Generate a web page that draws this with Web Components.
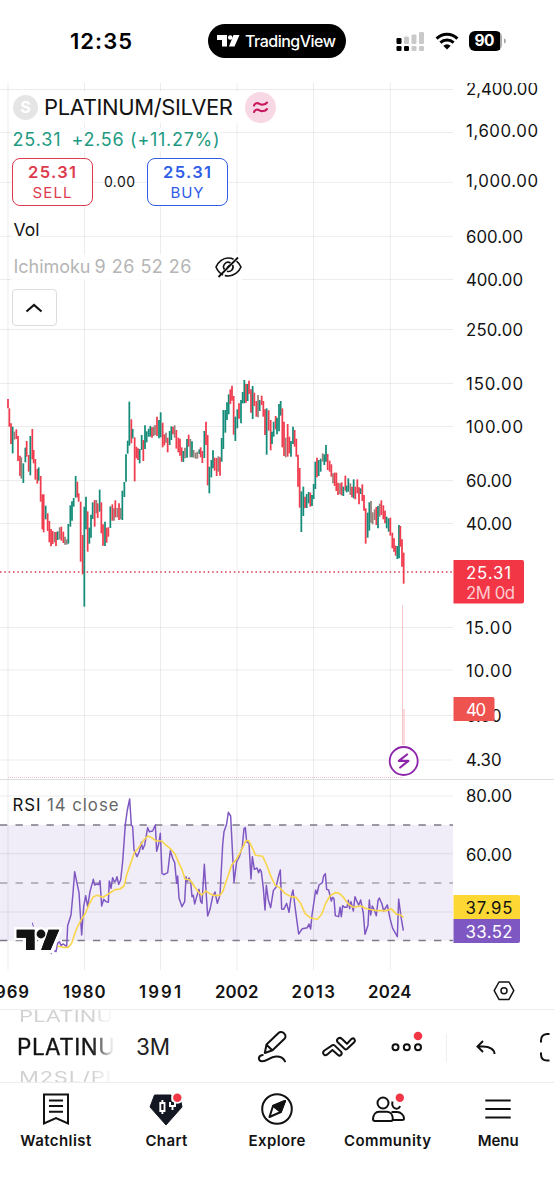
<!DOCTYPE html>
<html lang="en">
<head>
<meta charset="utf-8">
<title>Platinum/Silver chart</title>
<style>
html,body{margin:0;background:#fff}
body{width:554px;height:1200px;overflow:hidden;font-family:Inter,"Liberation Sans",sans-serif;color:#131313}
</style>
</head>
<body>
<trading-app></trading-app>
<script>
const define = (name, html, setup) => customElements.define(name, class extends HTMLElement {
  connectedCallback() {
    if (this.shadowRoot) return;
    const root = this.attachShadow({ mode: 'open' });
    const t = document.createElement('template');
    t.innerHTML = typeof html === 'function' ? html(this) : html;
    root.append(t.content.cloneNode(true));
    if (setup) setup(this, root);
  }
});

define('fit-text', `<style>:host{display:inline-block;white-space:nowrap;line-height:1}</style><span><slot></slot></span>`, (el, root) => {
  const target = +el.getAttribute('width');
  const span = root.querySelector('span');
  const natural = span.getBoundingClientRect().width;
  const n = el.textContent.length;
  if (target && natural) {
    span.style.letterSpacing = ((target - natural) / (n - 1)) + 'px';
    el.style.width = target + 'px';
  }
});

define('status-bar', `
<style>
:host{display:grid;grid-template-columns:208px 138px 1fr;height:83px;box-sizing:border-box;padding-top:24px;align-items:start}
.time{font-size:22px;font-weight:600;padding:4px 0 0 70px;color:#000}
.pill{height:34px;border-radius:17px;background:#000;color:#fff;display:flex;align-items:center;box-sizing:border-box;padding-left:9px;gap:5px;font-size:16px;font-weight:500}
.sys{display:flex;align-items:center;height:34px;padding-left:50px}
.bat{width:33px;height:20px;border-radius:6px;background:linear-gradient(90deg,#000 31px,#aaa 31px);display:flex;align-items:center;justify-content:center;color:#fff;font-size:15.500px;font-weight:700;margin-left:10px;box-sizing:border-box;padding-right:1px}
</style>
<div class="time"><fit-text width="62">12:35</fit-text></div>
<div class="pill"><svg width="23" height="12" viewBox="0 0 23 12" fill="#fff"><path d="M0 0H10V11.5H5V5H0ZM16.500 0H22.500L17.500 11.5H12Z"/><circle cx="13.200" cy="2.500" r="2.300"/></svg><fit-text width="91">TradingView</fit-text></div>
<div class="sys">
<svg width="28" height="22" viewBox="1 0 28 22"><g fill="#000"><rect x="1.500" y="8" width="5" height="6" rx="1.200"/><rect x="1.500" y="16" width="5" height="5" rx="1.200"/><rect x="9" y="16" width="5" height="5" rx="1.200"/></g><g fill="#c9c9c9"><rect x="9" y="6.500" width="5" height="7.500" rx="1.200"/><rect x="16.500" y="4.500" width="5" height="9.500" rx="1.200"/><rect x="24" y="2" width="5" height="12" rx="1.200"/><rect x="16.500" y="16" width="5" height="5" rx="1.200"/><rect x="24" y="16" width="5" height="5" rx="1.200"/></g></svg>
<svg width="24" height="20" viewBox="0 0 24 20" style="margin-left:10.500px"><g fill="none" stroke="#000" stroke-width="3"><path d="M1.600 7.600A14.800 14.800 0 0 1 22.400 7.600"/><path d="M5.400 11.700A9.500 9.500 0 0 1 18.600 11.700"/></g><path d="M8.300 14.700Q12 11.600 15.700 14.700L12 18.500Z"/></svg>
<div class="bat"><fit-text width="20">90</fit-text></div>
<svg width="5" height="20" viewBox="1 0 5 20"><path d="M3 7.200Q5 8 5 10T3 12.800Z" fill="#aaa"/></svg>
</div>`);

define('order-button', el => `
<style>
:host{display:flex;flex-direction:column;align-items:center;justify-content:center;gap:4.500px;width:81px;height:48px;box-sizing:border-box;border:1.500px solid currentColor;border-radius:8px;background:#fff;font-size:15px}
b{font-size:16.500px;font-weight:600;line-height:16px}
</style><b><fit-text width="48">${el.getAttribute('price')}</fit-text></b><fit-text width="${el.getAttribute('w')}">${el.getAttribute('label')}</fit-text>`);

define('chart-legend', `
<style>
:host{display:flex;flex-direction:column;align-items:flex-start;width:290px}
.row{display:flex;align-items:center;background:rgba(255,255,255,.82)}
.logo{width:25px;height:25px;border-radius:50%;background:#e5e5e5;color:#fff;font-size:16px;font-weight:700;display:flex;align-items:center;justify-content:center;margin-right:6px}
.approx{width:31px;height:31px;border-radius:50%;background:#f9d8e5;margin-left:12px;display:block}
.title{height:32px;font-size:22px;padding-left:1.500px}
.change{height:24px;margin-top:5px;color:#1e9a82;font-size:18px;padding-left:1px}
.trade{height:48px;margin-top:6px;background:none}
.spread{width:54px;display:flex;justify-content:center;font-size:14px}
.vol{height:26px;margin-top:11px;font-size:17.500px;padding-left:2px}
.ichi{height:26px;margin-top:11px;font-size:18px;color:#b5b5b5;padding-left:2px}
.ichi svg{margin-left:23px}
.fold{width:45px;height:37px;box-sizing:border-box;border:1.500px solid #dcdcdc;border-radius:4px;background:#fff;margin-top:9px;display:flex;align-items:center;justify-content:center}
</style>
<div class="row title"><span class="logo">S</span><fit-text width="189">PLATINUM/SILVER</fit-text><svg class="approx" viewBox="0 0 31 31"><g fill="none" stroke="#c8195f" stroke-width="2.100" stroke-linecap="round" stroke-linejoin="round"><path d="M9 13.500C10 11 12.500 10.500 14.500 11.800S20 13 22 10.500"/><path d="M9 20C10 17.500 12.500 17 14.500 18.300S20 19.500 22 17"/></g></svg></div>
<div class="row change"><fit-text width="48">25.31</fit-text><fit-text width="148" style="margin-left:11px">+2.56 (+11.27%)</fit-text></div>
<div class="row trade"><order-button price="25.31" label="SELL" w="39" style="color:#dd3b4d"></order-button><span class="spread"><fit-text width="31">0.00</fit-text></span><order-button price="25.31" label="BUY" w="33" style="color:#2f5de6"></order-button></div>
<div class="row vol"><fit-text width="26">Vol</fit-text></div>
<div class="row ichi"><fit-text width="77">Ichimoku</fit-text><fit-text width="97" style="margin-left:4px">9 26 52 26</fit-text>
<svg width="27" height="24" viewBox="0 0 27 24" fill="none" stroke="#111" stroke-width="1.600"><path d="M8 20C4.500 18.200 2 14.500 1 12C3 7 8 3 13 3C15 3 17 3.400 18.600 4.300M21.500 6.200C23.800 8 25.200 10.300 26 12C24 17 18.500 21 13.500 21C12 21 10.800 20.800 9.800 20.500"/><path d="M3.500 22L23 2.500" stroke-width="1.800"/><path d="M9.500 14.500A4.500 4.500 0 0 1 15.500 8M17.600 10A4.500 4.500 0 0 1 12 16.200M12 12.800L14.800 10.200"/></svg></div>
<div class="fold"><svg width="18" height="10" viewBox="0 0 18 10" fill="none" stroke="#111" stroke-width="2.100"><path d="M1.500 8.500L9 2L16.500 8.500"/></svg></div>`);

/* Candles: x, high, low in thirds of a pixel; colour r/g/m. */
const candles = `24 87 115 r;28 115 170 r;33 160 222 r;38 170 250 g;43 185 209 m;49 178 207 r;54 198 273 r;60 257 318 r;64 262 326 m;70 280 339 g;76 233 277 g;80 213 260 r;86 255 305 r;91 198 316 g;97 177 268 r;101 240 280 r;106 267 329 r;112 297 341 r;116 292 332 g;122 318 395 r;127 373 478 r;131 373 487 r;137 407 448 g;143 430 483 r;148 453 517 r;153 477 529 r;158 483 522 r;164 486 517 m;168 486 528 r;173 484 510 g;179 472 508 m;184 470 512 r;190 485 519 r;195 500 524 m;200 508 524 m;205 462 521 g;211 406 470 g;216 394 452 g;221 384 410 g;227 318 383 g;232 335 382 r;236 370 395 r;242 395 575 r;248 495 613 r;253 410 710 g;258 380 478 g;263 424 545 r;268 473 521 g;273 434 503 g;278 397 447 g;284 390 470 r;289 390 430 m;293 400 444 r;299 359 425 g;304 397 490 r;309 463 527 r;315 455 528 g;320 473 518 r;325 472 500 r;331 409 474 g;337 403 452 r;342 415 452 m;346 391 442 r;352 414 442 m;357 400 450 r;362 414 448 m;367 362 450 g;373 336 381 g;378 253 335 g;383 212 251 g;388 95 227 g;394 148 220 r;398 177 205 g;404 202 334 r;409 230 265 r;414 235 270 r;419 237 280 g;425 195 240 g;430 210 273 r;435 166 237 g;440 184 217 g;446 176 200 g;451 168 200 g;456 172 203 r;461 170 198 m;465 165 195 m;471 140 198 r;477 150 205 g;482 127 202 g;488 158 232 r;493 193 226 r;498 188 218 m;503 203 247 r;509 183 225 g;514 169 210 g;519 170 193 r;524 166 203 m;529 180 236 r;535 203 247 r;540 206 257 r;545 232 275 r;550 243 276 g;555 233 265 m;561 207 263 g;566 194 230 r;571 207 262 m;576 214 262 g;581 240 263 m;587 248 266 m;592 245 266 m;598 238 252 g;602 232 262 r;607 243 279 r;613 183 264 g;618 155 225 r;623 195 346 r;628 290 370 g;634 270 322 g;639 241 295 g;644 263 302 r;650 264 318 r;655 259 305 m;660 262 317 r;665 204 275 g;670 120 237 g;676 120 188 g;681 97 150 g;686 73 133 g;691 58 102 r;696 47 92 r;701 78 194 r;706 140 213 g;712 118 175 g;717 100 146 r;723 90 160 g;728 66 100 g;733 30 100 g;738 42 98 r;743 42 93 g;747 32 72 r;753 58 128 r;758 48 147 g;763 68 108 r;769 93 140 r;774 75 142 m;779 90 123 g;785 77 105 r;790 93 140 r;795 118 195 r;800 115 254 g;806 121 182 r;812 150 241 r;816 185 222 g;821 155 200 g;827 138 178 r;831 143 193 g;837 102 184 g;842 93 137 g;847 115 232 r;852 155 258 r;857 203 262 m;863 162 260 r;868 200 250 r;873 213 260 g;879 170 222 g;884 180 230 r;889 206 260 r;894 254 350 r;899 294 413 r;904 364 486 g;910 350 438 g;915 380 414 r;920 372 414 g;926 366 400 g;931 368 410 r;936 375 408 g;941 342 387 g;946 275 357 g;951 263 322 r;956 270 318 g;962 266 305 g;968 250 275 m;973 253 285 g;978 225 275 g;983 252 300 r;989 272 305 r;994 283 320 r;999 310 340 m;1004 308 348 r;1009 308 363 r;1014 338 375 r;1020 340 373 m;1025 337 376 r;1030 350 378 g;1036 317 362 r;1040 347 367 g;1045 325 365 g;1051 340 375 m;1056 350 382 r;1061 328 385 g;1066 350 388 r;1072 328 370 r;1077 352 403 r;1082 355 372 g;1087 343 393 r;1092 375 422 r;1097 415 521 r;1103 428 503 g;1108 397 482 g;1113 393 458 m;1118 427 463 m;1124 418 450 m;1129 411 465 r;1134 408 475 g;1139 401 440 m;1144 391 435 r;1150 406 448 r;1155 422 460 r;1160 440 475 g;1166 445 485 g;1171 443 497 r;1177 488 535 r;1182 505 545 r;1187 527 557 r;1192 528 567 g;1197 465 565 g;1201 468 530 r;1206 508 590 r;1211 548 641 r`;
const shift = (s, dx) => s.trim().split(/\s+/).map(p => { const [x, y] = p.split(',').map(Number); return (x + dx) + ',' + y; }).join(' ');
const rsi = `163,512 168,515 173,490 178,485 183,496 190,492 200,500 203,437 213,405 219,340 224,275 230,305 237,338 245,465 251,380 257,347 263,380 270,335 280,298 284,315 290,312 296,314 300,302 305,378 311,358 318,365 325,367 328,303 333,325 338,293 343,305 347,303 351,290 356,313 362,300 368,245 376,133 382,90 389,57 394,135 398,140 402,210 411,230 418,215 424,187 428,208 434,195 443,143 448,155 458,153 466,135 470,214 476,192 481,160 486,280 492,284 503,278 511,212 518,235 524,248 530,310 533,288 537,354 546,380 554,365 558,290 562,305 567,294 572,305 576,350 580,346 584,372 590,350 597,328 602,365 606,370 613,253 618,330 623,408 ` + shift(`0,388 8,350 15,336 22,370 30,345 38,195 42,155 50,132 55,97 62,108 72,307 80,245 88,230 97,200 102,146 106,143 110,185 117,190 123,297 127,230 133,268 141,264 146,278 150,268 154,275 160,325 165,390 169,316 175,360 182,383 190,332 198,322 206,287 211,270 215,387 221,388 230,370 237,397 243,353 249,330 255,380 266,462 277,446 292,443 297,432 302,447 306,405 312,365 317,330 321,342 327,315 337,308 341,288 346,281 350,328 356,330 364,363 368,352 372,356 376,407 386,410 390,382 394,410 398,377 404,382 411,382 415,361 419,386 423,365 430,393 435,350 440,362 446,376 452,360 460,400 465,463 474,436 478,360 482,405 487,378 493,390 499,407 504,362 508,354 516,372 521,393 532,375 540,415 548,445 562,470 566,357 573,410 580,452`, 630);
const average = `172,498 190,502 205,502 215,490 228,450 242,422 255,402 268,372 280,350 292,346 308,352 325,342 345,329 360,327 372,318 380,285 392,250 403,218 418,200 430,182 443,168 455,173 468,183 485,183 497,195 512,207 525,222 535,245 547,272 555,297 570,300 582,318 597,338 605,345 617,333 ` + shift(`0,341 10,346 30,346 38,335 50,300 65,255 80,237 92,215 108,182 116,182 125,200 137,226 158,229 170,255 183,290 195,315 208,322 225,340 243,350 258,352 272,370 285,400 300,413 322,418 335,403 347,370 360,348 375,338 388,340 400,352 415,372 430,382 452,378 470,386 500,392 530,392 543,386 560,403 572,405 580,412`, 630);

define('market-chart', () => {
  const ink = { r: '#f03c4e', g: '#148c79', m: '#96827a' };
  const cols = [8, 84.5, 160.5, 237, 313.5, 390.3];
  const rows = [89.5, 132.500, 182.300, 236.300, 279.500, 329.500, 383.500, 426.500, 480.500, 523.500, 627.500, 670, 715.500, 760, 796, 853.700, 912];
  const label = (x, y, w, t, a = '') => `<text x="${x}" y="${y}" textLength="${w}" ${a}>${t}</text>`;
  const prices = [['2,400.00', 88.500, 72], ['1,600.00', 131, 72], ['1,000.00', 181, 72], ['600.00', 236.5, 57], ['400.00', 279.500, 57], ['250.00', 329.5, 57], ['150.00', 383.5, 57], ['100.00', 426.5, 57], ['60.00', 480.5, 46], ['40.00', 523.5, 46], ['15.00', 627.500, 46], ['10.00', 670.500, 46], ['6.50', 716, 35.500], ['4.30', 760, 35.500], ['80.00', 796, 46], ['60.00', 854.500, 46]];
  const years = [['1969', -13, 42], ['1980', 63, 42.500], ['1991', 139, 42], ['2002', 215, 43.500], ['2013', 291.500, 43.500], ['2024', 368, 43.500]];
  return `
<style>
:host{display:grid;height:926px;position:relative;overflow:hidden;border-bottom:1px solid #ededed}
svg{display:block;font-family:Inter,"Liberation Sans",sans-serif;font-size:16.800px;fill:#131313}
chart-legend{position:absolute;left:11.500px;top:8px}
</style>
<svg width="554" height="926" viewBox="0 83 554 926">
<rect x="0" y="825" width="453" height="115.500" fill="#f0ecf8"/>
<g stroke="#000" stroke-opacity=".075">${cols.map(x => `<path d="M${x} 83V970"/>`).join('')}${rows.map(y => `<path d="M0 ${y}H453"/>`).join('')}</g>
<path d="M0 779.500H554" stroke="#dedede"/><path d="M8 777.500H404" stroke="#e9a7ad" stroke-dasharray="1 1" opacity=".65"/>
<path d="M402.500 605V745" stroke="#f6c8cb"/><path d="M404 709V745" stroke="#f6c8cb" stroke-width="1.300"/>
<g transform="translate(0 370) scale(.33333)" stroke-width="5.300">${candles.split(';').map(c => { const [x, a, b, k] = c.split(' '); return `<path d="M${x} ${a}V${b}" stroke="${ink[k]}"/>`; }).join('')}</g>
<path d="M0 572H452" stroke="#d8394b" stroke-width="1.500" stroke-dasharray="1.500 2.830"/>
<g stroke="#7d7987" stroke-width="1.500" stroke-dasharray="7.300 8.200"><path d="M0 825H453"/><path d="M0 883H453" stroke="#a5a2ac" stroke-width="1.300"/><path d="M0 940.500H453"/></g>
<g transform="translate(0 780) scale(.33333)" fill="none" stroke-linejoin="round"><polyline points="${rsi}" stroke="#7e57c2" stroke-width="4.400"/><path d="M97 428L100 440M152 520L156 522" stroke="#7e57c2" stroke-width="3"/><polyline points="${average}" stroke="#f9d649" stroke-width="4.800"/></g>
<g fill="#131313" stroke="#fff" stroke-width="5" paint-order="stroke"><path d="M16.700 929.700H34.500V950H26V937.700H16.700ZM48.500 929.700H59.200L50.500 950H41.200Z"/><circle cx="41" cy="934" r="4.400"/></g>
<path d="M16.700 929.700H34.500V950H26V937.700H16.700ZM48.500 929.700H59.200L50.500 950H41.200Z"/>
<g><circle cx="403.700" cy="761" r="14" fill="#fff" stroke="#8e24aa" stroke-width="1.800"/><path d="M407 754.500L398.800 760.800L408.400 760.800L400.200 767.500" fill="none" stroke="#8e24aa" stroke-width="2.200" stroke-linejoin="round" stroke-linecap="round"/></g>
${prices.map(([t, y, w]) => label(466, y + 6, w, t)).join('')}
<path d="M453.500 560H522Q524 560 524 562V601.500Q524 603.500 522 603.500H453.500Z" fill="#f23645"/>
${label(466, 578.600, 45, '25.31', 'fill="#fff"')}${label(466, 598.700, 49, '2M 0d', 'fill="#fff" fill-opacity=".75"')}
<path d="M453.500 697H492.500Q494.500 697 494.500 699V721H453.500Z" fill="#ef5350"/>${label(466, 715.500, 20, '40', 'fill="#fff"')}
<path d="M453.500 895H518Q520 895 520 897V919H453.500Z" fill="#fdd835"/>${label(465.500, 913.500, 47, '37.95')}
<path d="M453.500 919H520V941Q520 943 518 943H453.500Z" fill="#7e57c2"/>${label(465.500, 937.500, 47, '33.52', 'fill="#fff"')}
${label(12.500, 810.600, 28, 'RSI')}${label(47, 810.600, 71.500, '14 close', 'fill="#666"')}
<rect x="0" y="970" width="554" height="39" fill="#fff"/>
<g font-weight="600">${years.map(([t, x, w]) => label(x, 997.500, w, t)).join('')}</g>
<g fill="none" stroke="#131313" stroke-width="1.500" stroke-linejoin="round"><path d="M499 982H509L513.800 990.700L509 999.400H499L494.200 990.700Z"/><circle cx="504" cy="990.700" r="3"/></g>
</svg>
<chart-legend></chart-legend>`;
});

define('symbol-wheel', `
<style>
:host{display:flex;flex-direction:column;width:117px;height:73px;overflow:hidden;padding-left:17px;box-sizing:border-box;-webkit-mask:linear-gradient(90deg,#000 92px,transparent 114px);mask:linear-gradient(90deg,#000 92px,transparent 114px)}
.side{font-size:22px;color:#d2d2d2;height:14px;position:relative;left:2px;white-space:nowrap;line-height:22px;transform-origin:0 0;transform:scaleY(.72)}
.main{height:45px;display:flex;align-items:center;font-size:22.500px;-webkit-text-stroke:.35px #131313}
</style>
<div class="side" style="margin-top:-2px"><fit-text width="94">PLATINU</fit-text></div>
<div class="main" style="margin-top:3px"><fit-text width="98">PLATINU</fit-text></div>
<div class="side" style="margin-top:-1.500px"><fit-text width="99">M2SL/PL</fit-text></div>`);

define('chart-toolbar', `
<style>
:host{display:grid;grid-template-columns:117px 131px 49px 67px 76px 1fr;align-items:center;height:73px;border-bottom:1px solid #ededed;box-sizing:border-box;overflow:hidden}
.tf{padding-left:19px;font-size:22.500px;color:#222}
svg{display:block;fill:none;stroke:#111;stroke-width:2;stroke-linecap:round;stroke-linejoin:round}
</style>
<symbol-wheel></symbol-wheel>
<div class="tf"><fit-text width="34">3M</fit-text></div>
<svg width="49" height="72" viewBox="248 1010 49 72"><path d="M264.800 1052L266.500 1043.500L278.500 1032C280 1030.500 282.500 1030.800 284 1032.300C285.800 1034 286 1036.300 284.500 1037.800L272.500 1049.200ZM266.500 1043.800L272 1049"/><path d="M262.700 1054C258 1054.500 257.500 1060 262 1060.300C267.500 1060.500 269.500 1055.600 276 1055.400C280 1055.300 283.500 1057 285 1060.300"/></svg>
<svg width="67" height="72" viewBox="297 1010 67 72"><path d="M324.400 1049.500L332.500 1044.200Q333.800 1043.500 334.800 1044.600L341 1050.600C343 1053 340 1056 337.800 1053.800L332.400 1049L327 1053.700C323.800 1055.800 321.800 1051.500 324.400 1049.500Z"/><path d="M341.800 1037.700L347 1042.800L351.500 1037.900C354 1036.300 356 1039.300 354.200 1041.200L347 1048Q345.700 1049 344.500 1047.700L337.500 1041C335.800 1038.400 339.300 1035.500 341.800 1037.700Z"/></svg>
<svg width="76" height="72" viewBox="364 1010 76 72"><circle cx="395.500" cy="1046.300" r="3"/><circle cx="406.800" cy="1046.300" r="3"/><circle cx="418" cy="1046.300" r="3"/><circle cx="418" cy="1035" r="4.300" fill="#f23645" stroke="none"/></svg>
<svg width="114" height="72" viewBox="440 1010 114 72"><path d="M446.500 1033V1061" stroke="#eee" stroke-width="1"/><path d="M483 1040L477.500 1045.500L483 1051M478 1045.500H483C490 1045.500 494.500 1048.500 494.500 1053" stroke-linejoin="miter" stroke-linecap="butt"/><path d="M549.500 1033H547Q541 1033.500 541 1039.500V1041.500M541 1051.500V1053.500Q541.200 1059.500 547 1059.500H549.500" stroke-linecap="butt"/></svg>`);

define('nav-item', el => `
<style>:host{display:flex;flex-direction:column;align-items:center;font-size:15px;font-weight:600;width:110.600px}
svg{display:block;overflow:visible}fit-text{margin-top:7px}</style>
<slot></slot><fit-text width="${el.getAttribute('w')}">${el.getAttribute('label')}</fit-text>`);

define('bottom-nav', `
<style>
:host{display:flex;height:117px;padding:9px 0 0 .5px;box-sizing:border-box}
svg{display:block;fill:none;stroke:#111;stroke-width:2}
</style>
<nav-item label="Watchlist" w="71"><svg width="34" height="34" viewBox="-17 -17 34 34"><path d="M-12 -14.500H12V14.500L0 9L-12 14.500ZM-7 -8.500H7M-7 -3H7M-7 2.700H7"/></svg></nav-item>
<nav-item label="Chart" w="42"><svg width="34" height="34" viewBox="-17 -17 34 34"><path d="M-11.500 -14H5V-7H15L16 -2L0 16L-16 -2Z" fill="#131722" stroke="#131722" stroke-width="1"/><path d="M-5.700 -6H-1.500V2H-5.700ZM-3.600 -9V-6M-3.600 2V5M4 -7V-3H9V-7M6.500 -3V1" stroke="#fff" stroke-width="1.900"/><circle cx="11.300" cy="-11.200" r="6" fill="#fff" stroke="none"/><circle cx="11.300" cy="-11.200" r="4.200" fill="#f23645" stroke="none"/></svg></nav-item>
<nav-item label="Explore" w="57"><svg width="34" height="34" viewBox="-17 -17 34 34"><circle r="14.800"/><path d="M8 -8L3.800 3L-7.500 8L-4 -3Z" stroke-linejoin="round"/><path d="M8 -8L3.800 3L-4 -3Z" fill="#111" stroke-linejoin="round"/></svg></nav-item>
<nav-item label="Community" w="87"><svg width="34" height="34" viewBox="-17 -17 34 34"><circle cx="-5" cy="-6" r="5.500"/><path d="M4.500 -7.500C3 0 10.500 2 12 -3M-9 2.800H-1C3 2.800 4.800 6.500 4.800 10C4.800 11.500 4 12 3 12H-13C-14.500 12 -15 11 -15 10C-14.700 6 -12.500 2.800 -9 2.800ZM3.500 3H9C13 3 16 6.500 16 9.500C16 10.800 15 11 14 11H5"/><circle cx="11.800" cy="-11.200" r="4.200" fill="#f23645" stroke="none"/></svg></nav-item>
<nav-item label="Menu" w="41"><svg width="34" height="34" viewBox="-17 -17 34 34"><path d="M-12.700 -8.500H12.700M-12.700 0H12.700M-12.700 8.500H12.700"/></svg></nav-item>`);

define('trading-app', `<style>:host{display:flex;flex-direction:column;width:554px;height:1200px;background:#fff}</style>
<status-bar></status-bar><market-chart></market-chart><chart-toolbar></chart-toolbar><bottom-nav></bottom-nav>`);
</script>
</body>
</html>
